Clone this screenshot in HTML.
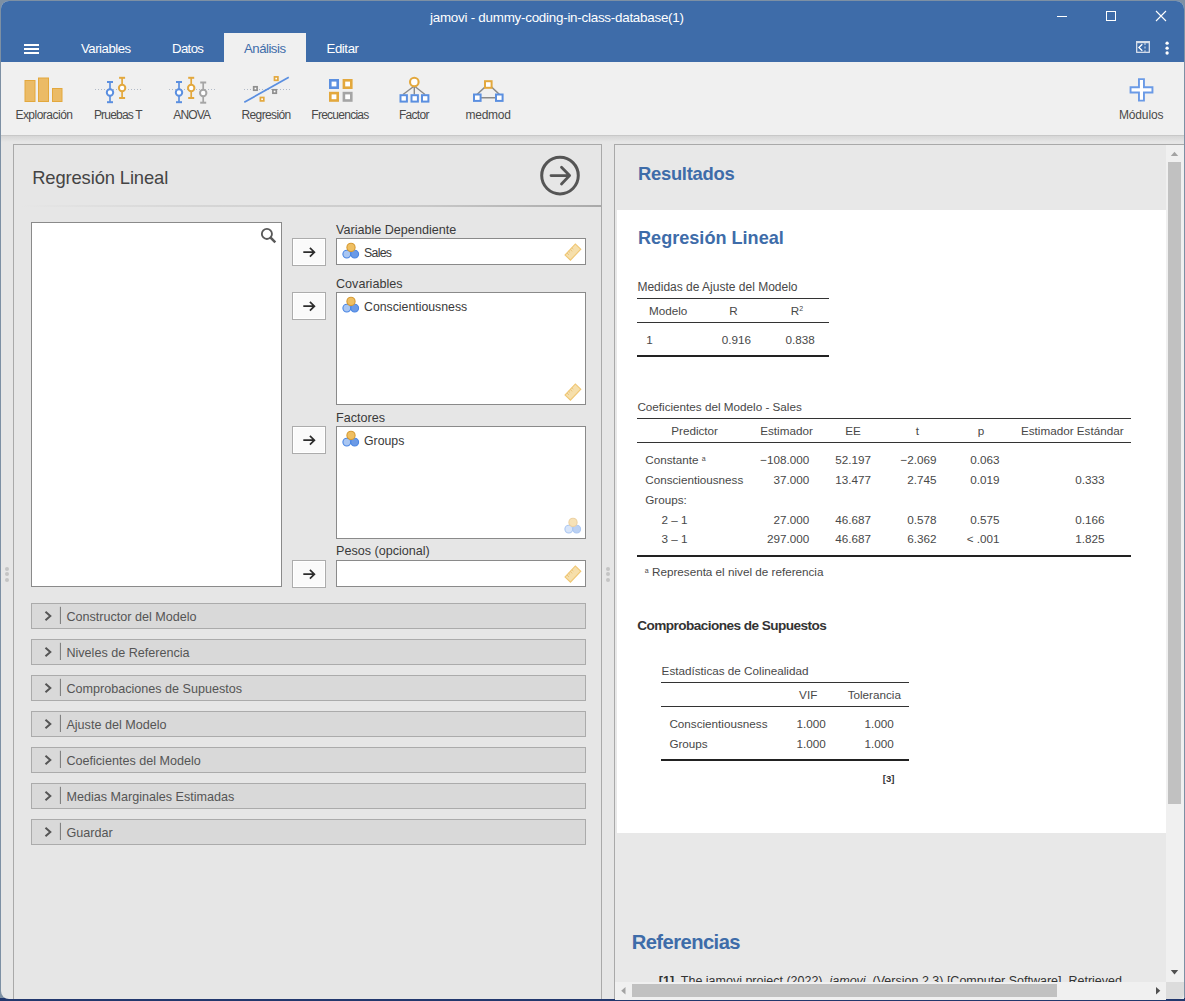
<!DOCTYPE html>
<html><head><meta charset="utf-8">
<style>
*{margin:0;padding:0;box-sizing:border-box}
html,body{width:1185px;height:1001px;overflow:hidden;background:#7d90a4;font-family:"Liberation Sans",sans-serif;color:#333;position:relative}
.a{position:absolute}
.t{position:absolute;white-space:nowrap;line-height:1}
sup{line-height:0}
</style></head><body>
<div class="a" style="left:0px;top:998px;width:1185px;height:3px;background:#22386e"></div>
<div class="a" style="left:1px;top:1px;width:1183px;height:998px;background:#e6e6e6;border-radius:8px 8px 8px 8px;overflow:hidden" id="win"></div>
<div class="a" style="left:1px;top:1px;width:1183px;height:61px;background:#3e6ca9;border-radius:8px 8px 0 0"></div>
<div class="t" style="top:10.56px;font-size:13.4px;color:#fff;letter-spacing:-0.249px;left:430px;">jamovi - dummy-coding-in-class-database(1)</div>
<svg class="a" style="left:1050px;top:5px" width="130" height="24" viewBox="1050 5 130 24"><line x1="1057" y1="16.5" x2="1067" y2="16.5" stroke="#fff" stroke-width="1"/><rect x="1106.5" y="11.5" width="9" height="9" fill="none" stroke="#fff" stroke-width="1"/><path d="M1156 11 L1166 21 M1166 11 L1156 21" stroke="#fff" stroke-width="1.1"/></svg>
<div class="a" style="left:24px;top:44px;width:15px;height:2px;background:#fff"></div>
<div class="a" style="left:24px;top:48px;width:15px;height:2px;background:#fff"></div>
<div class="a" style="left:24px;top:52px;width:15px;height:2px;background:#fff"></div>
<div class="a" style="left:224px;top:33px;width:82px;height:29px;background:#f0f0f0"></div>
<div class="t" style="top:42.23px;font-size:13.2px;color:#fff;letter-spacing:-0.482px;left:81px;">Variables</div>
<div class="t" style="top:42.23px;font-size:13.2px;color:#fff;letter-spacing:-0.621px;left:172px;">Datos</div>
<div class="t" style="top:42.23px;font-size:13.2px;color:#3e6ca9;letter-spacing:-0.496px;left:244px;">Análisis</div>
<div class="t" style="top:42.23px;font-size:13.2px;color:#fff;letter-spacing:-0.397px;left:326.5px;">Editar</div>
<svg class="a" style="left:1130px;top:36px" width="50" height="22" viewBox="1130 36 50 22"><rect x="1136.7" y="41.7" width="12.6" height="10.6" fill="none" stroke="#e4e9f1" stroke-width="1.2"/><rect x="1136.1" y="41" width="13.8" height="2.2" fill="#d6dee9"/><line x1="1145" y1="43" x2="1145" y2="52.3" stroke="#b9c8dc" stroke-width="1.3" stroke-dasharray="2 1.6"/><path d="M1142.3 44.2 L1138.9 47.5 L1142.3 50.8" fill="none" stroke="#fff" stroke-width="1.3"/><circle cx="1167.1" cy="43.2" r="1.65" fill="#fff"/><circle cx="1167.1" cy="48.2" r="1.65" fill="#fff"/><circle cx="1167.1" cy="53" r="1.65" fill="#fff"/></svg>
<div class="a" style="left:1px;top:62px;width:1183px;height:73px;background:#f0f0f0"></div>
<div class="a" style="left:1px;top:135px;width:1183px;height:1px;background:#c8c8c8"></div>
<div class="a" style="left:1px;top:136px;width:1183px;height:6px;background:linear-gradient(#d6d6d6,#e6e6e6)"></div>
<svg class="a" style="left:0;top:61px" width="1185" height="74" viewBox="0 61 1185 74"><rect x="25" y="80.5" width="10" height="21" fill="#ebbb66" stroke="#e3a83d" stroke-width="1"/><rect x="38.5" y="78" width="10" height="23.5" fill="#ebbb66" stroke="#e3a83d" stroke-width="1"/><rect x="52.5" y="88.5" width="9.5" height="13" fill="#ebbb66" stroke="#e3a83d" stroke-width="1"/><line x1="95" y1="89.5" x2="141" y2="89.5" stroke="#a9b3c2" stroke-width="0.9" stroke-dasharray="1 2"/><line x1="110" y1="82" x2="110" y2="102.2" stroke="#5b8fe0" stroke-width="1.7"/><line x1="107" y1="82" x2="113" y2="82" stroke="#5b8fe0" stroke-width="2"/><line x1="107" y1="102.2" x2="113" y2="102.2" stroke="#5b8fe0" stroke-width="2"/><circle cx="110" cy="92.5" r="3.2" fill="#fff" stroke="#5b8fe0" stroke-width="2"/><line x1="122.1" y1="77.8" x2="122.1" y2="98" stroke="#e3a83d" stroke-width="1.7"/><line x1="119.1" y1="77.8" x2="125.1" y2="77.8" stroke="#e3a83d" stroke-width="2"/><line x1="119.1" y1="98" x2="125.1" y2="98" stroke="#e3a83d" stroke-width="2"/><circle cx="122.1" cy="88" r="3.2" fill="#fff" stroke="#e3a83d" stroke-width="2"/><line x1="169" y1="89.5" x2="215" y2="89.5" stroke="#a9b3c2" stroke-width="0.9" stroke-dasharray="1 2"/><line x1="179" y1="82" x2="179" y2="102.2" stroke="#5b8fe0" stroke-width="1.7"/><line x1="176" y1="82" x2="182" y2="82" stroke="#5b8fe0" stroke-width="2"/><line x1="176" y1="102.2" x2="182" y2="102.2" stroke="#5b8fe0" stroke-width="2"/><circle cx="179" cy="92.5" r="3.2" fill="#fff" stroke="#5b8fe0" stroke-width="2"/><line x1="191.2" y1="77.8" x2="191.2" y2="98" stroke="#e3a83d" stroke-width="1.7"/><line x1="188.2" y1="77.8" x2="194.2" y2="77.8" stroke="#e3a83d" stroke-width="2"/><line x1="188.2" y1="98" x2="194.2" y2="98" stroke="#e3a83d" stroke-width="2"/><circle cx="191.2" cy="88" r="3.2" fill="#fff" stroke="#e3a83d" stroke-width="2"/><line x1="203.2" y1="82.5" x2="203.2" y2="102.7" stroke="#a5a5a5" stroke-width="1.7"/><line x1="200.2" y1="82.5" x2="206.2" y2="82.5" stroke="#a5a5a5" stroke-width="2"/><line x1="200.2" y1="102.7" x2="206.2" y2="102.7" stroke="#a5a5a5" stroke-width="2"/><circle cx="203.2" cy="93" r="3.2" fill="#fff" stroke="#a5a5a5" stroke-width="2"/><line x1="244" y1="89.5" x2="290" y2="89.5" stroke="#a9b3c2" stroke-width="0.9" stroke-dasharray="1 2"/><line x1="244.3" y1="102.3" x2="288.8" y2="77.2" stroke="#5b8fe0" stroke-width="1.7"/><rect x="253.70000000000002" y="86.8" width="3.4" height="3.4" fill="#fff" stroke="#8f8f8f" stroke-width="1.7"/><rect x="274.5" y="76.89999999999999" width="3.4" height="3.4" fill="#fff" stroke="#e3a83d" stroke-width="1.7"/><rect x="272.90000000000003" y="89.8" width="3.4" height="3.4" fill="#fff" stroke="#8f8f8f" stroke-width="1.7"/><rect x="260.40000000000003" y="97.5" width="3.4" height="3.4" fill="#fff" stroke="#e3a83d" stroke-width="1.7"/><rect x="330.3" y="80.3" width="7.4" height="7.4" fill="#fff" stroke="#5b8fe0" stroke-width="2.6"/><rect x="343.90000000000003" y="80.3" width="7.4" height="7.4" fill="#fff" stroke="#e3a83d" stroke-width="2.6"/><rect x="330.3" y="93.1" width="7.4" height="7.4" fill="#fff" stroke="#e3a83d" stroke-width="2.6"/><rect x="343.90000000000003" y="93.1" width="7.4" height="7.4" fill="#fff" stroke="#a5a5a5" stroke-width="2.6"/><path d="M414.3 86 L403 94.5 M414.3 86 L414.3 94.5 M414.3 86 L425 94.5" stroke="#8a8a8a" stroke-width="1.4" fill="none"/><circle cx="414.3" cy="82" r="4.3" fill="#fff" stroke="#e3a83d" stroke-width="2.1"/><rect x="400.5" y="95.2" width="6.4" height="6.4" fill="#fff" stroke="#5b8fe0" stroke-width="2"/><rect x="411.5" y="95.2" width="6.4" height="6.4" fill="#fff" stroke="#5b8fe0" stroke-width="2"/><rect x="422" y="95.2" width="6.4" height="6.4" fill="#fff" stroke="#5b8fe0" stroke-width="2"/><path d="M485 87 L477 94.5 M491.5 87 L499.5 94.5 M481 97.8 L495 97.8" stroke="#8a8a8a" stroke-width="1.6" fill="none"/><rect x="485" y="81.2" width="6.6" height="6.6" fill="#fff" stroke="#e3a83d" stroke-width="2"/><rect x="474" y="94.5" width="6.6" height="6.4" fill="#fff" stroke="#5b8fe0" stroke-width="2"/><rect x="496" y="94.5" width="6.6" height="6.4" fill="#fff" stroke="#5b8fe0" stroke-width="2"/><path d="M1138.95 79.15 H1143.95 V87.25 H1152.45 V92.55 H1143.95 V100.65 H1138.95 V92.55 H1130.55 V87.25 H1138.95 Z" fill="#fff" stroke="#6a9ae6" stroke-width="1.9"/></svg>
<div class="t" style="top:108.84px;font-size:12px;color:#4a4a4a;letter-spacing:-0.510px;left:15.4px;">Exploración</div>
<div class="t" style="top:108.84px;font-size:12px;color:#4a4a4a;letter-spacing:-0.805px;left:93.9px;">Pruebas T</div>
<div class="t" style="top:108.84px;font-size:12px;color:#4a4a4a;letter-spacing:-0.857px;left:173.3px;">ANOVA</div>
<div class="t" style="top:108.84px;font-size:12px;color:#4a4a4a;letter-spacing:-0.624px;left:241.5px;">Regresión</div>
<div class="t" style="top:108.84px;font-size:12px;color:#4a4a4a;letter-spacing:-0.737px;left:311.3px;">Frecuencias</div>
<div class="t" style="top:108.84px;font-size:12px;color:#4a4a4a;letter-spacing:-0.684px;left:398.9px;">Factor</div>
<div class="t" style="top:108.84px;font-size:12px;color:#4a4a4a;letter-spacing:-0.216px;left:465.4px;">medmod</div>
<div class="t" style="top:108.84px;font-size:12px;color:#4a4a4a;letter-spacing:-0.160px;left:1119px;">Módulos</div>
<div class="a" style="left:13px;top:144px;width:589px;height:855px;border:1px solid #a9a9a9;border-bottom:none;background:#e6e6e6"></div>
<div class="t" style="top:169.22px;font-size:18.4px;color:#444;letter-spacing:-0.133px;left:32.2px;">Regresión Lineal</div>
<svg class="a" style="left:535px;top:150px" width="50" height="50" viewBox="535 150 50 50"><circle cx="560" cy="175.6" r="18.3" fill="none" stroke="#555" stroke-width="3"/><path d="M551 175.6 H569 M561.5 167.3 L569.6 175.6 L561.5 183.9" fill="none" stroke="#555" stroke-width="2.8" stroke-linecap="round" stroke-linejoin="round"/></svg>
<div class="a" style="left:20px;top:205px;width:581px;height:2px;background:linear-gradient(90deg,#e6e6e6,#d6d6d6 30%,#c8c8c8 70%,#a9a9a9)"></div>
<div class="a" style="left:31px;top:222px;width:251px;height:365px;background:#fff;border:1px solid #8a8a8a"></div>
<svg class="a" style="left:255px;top:224px" width="26" height="24" viewBox="255 224 26 24"><circle cx="266.9" cy="233.9" r="5.05" fill="none" stroke="#595959" stroke-width="1.85"/><line x1="270.6" y1="237.6" x2="275.3" y2="242.4" stroke="#595959" stroke-width="2.5"/></svg>
<div class="a" style="left:292px;top:238px;width:34px;height:28px;background:#fafafa;border:1px solid #acacac;box-shadow:inset 0 0 0 1px #fff"></div>
<svg class="a" style="left:292px;top:238px" width="34" height="28" viewBox="0 0 34 28"><path d="M11.3 14.2 H22.2 M17.9 9.8 L22.4 14.2 L17.9 18.6" fill="none" stroke="#2d2d2d" stroke-width="1.7"/></svg>
<div class="a" style="left:292px;top:292px;width:34px;height:28px;background:#fafafa;border:1px solid #acacac;box-shadow:inset 0 0 0 1px #fff"></div>
<svg class="a" style="left:292px;top:292px" width="34" height="28" viewBox="0 0 34 28"><path d="M11.3 14.2 H22.2 M17.9 9.8 L22.4 14.2 L17.9 18.6" fill="none" stroke="#2d2d2d" stroke-width="1.7"/></svg>
<div class="a" style="left:292px;top:426px;width:34px;height:28px;background:#fafafa;border:1px solid #acacac;box-shadow:inset 0 0 0 1px #fff"></div>
<svg class="a" style="left:292px;top:426px" width="34" height="28" viewBox="0 0 34 28"><path d="M11.3 14.2 H22.2 M17.9 9.8 L22.4 14.2 L17.9 18.6" fill="none" stroke="#2d2d2d" stroke-width="1.7"/></svg>
<div class="a" style="left:292px;top:560px;width:34px;height:28px;background:#fafafa;border:1px solid #acacac;box-shadow:inset 0 0 0 1px #fff"></div>
<svg class="a" style="left:292px;top:560px" width="34" height="28" viewBox="0 0 34 28"><path d="M11.3 14.2 H22.2 M17.9 9.8 L22.4 14.2 L17.9 18.6" fill="none" stroke="#2d2d2d" stroke-width="1.7"/></svg>
<div class="t" style="top:224.03px;font-size:12.6px;color:#3a3a3a;left:336px;">Variable Dependiente</div>
<div class="a" style="left:336px;top:238px;width:250px;height:27px;background:#fff;border:1px solid #8a8a8a"></div>
<svg class="a" style="left:341px;top:242px;opacity:1.0" width="20" height="20" viewBox="0 0 20 20"><circle cx="5.8" cy="12.1" r="3.9" fill="#a9c6f2" stroke="#4a86e3" stroke-width="1.1"/><circle cx="13.7" cy="12.1" r="3.9" fill="#6b9ae6" stroke="#4a86e3" stroke-width="1.1"/><circle cx="10" cy="5.4" r="4.1" fill="#efbf62" stroke="#d69b35" stroke-width="1.1"/></svg>
<div class="t" style="top:246.69px;font-size:12.3px;color:#3a3a3a;left:364px;letter-spacing:-0.7px">Sales</div>
<svg class="a" style="left:563px;top:242px" width="20" height="20" viewBox="0 0 20 20"><g transform="rotate(-46.5 9.9 10.1)"><rect x="2.4" y="6.35" width="15" height="7.5" fill="#f6dfab" stroke="#f0c774" stroke-width="1.1"/><path d="M5.2 6.4 V9.2 M7.6 6.4 V8.4 M10 6.4 V9.2 M12.4 6.4 V8.4" stroke="#e6bf73" stroke-width="0.8"/></g></svg>
<div class="t" style="top:277.83px;font-size:12.6px;color:#3a3a3a;left:336px;">Covariables</div>
<div class="a" style="left:336px;top:292px;width:250px;height:113px;background:#fff;border:1px solid #8a8a8a"></div>
<svg class="a" style="left:341px;top:296px;opacity:1.0" width="20" height="20" viewBox="0 0 20 20"><circle cx="5.8" cy="12.1" r="3.9" fill="#a9c6f2" stroke="#4a86e3" stroke-width="1.1"/><circle cx="13.7" cy="12.1" r="3.9" fill="#6b9ae6" stroke="#4a86e3" stroke-width="1.1"/><circle cx="10" cy="5.4" r="4.1" fill="#efbf62" stroke="#d69b35" stroke-width="1.1"/></svg>
<div class="t" style="top:300.79px;font-size:12.3px;color:#3a3a3a;left:364px;">Conscientiousness</div>
<svg class="a" style="left:563px;top:382px" width="20" height="20" viewBox="0 0 20 20"><g transform="rotate(-46.5 9.9 10.1)"><rect x="2.4" y="6.35" width="15" height="7.5" fill="#f6dfab" stroke="#f0c774" stroke-width="1.1"/><path d="M5.2 6.4 V9.2 M7.6 6.4 V8.4 M10 6.4 V9.2 M12.4 6.4 V8.4" stroke="#e6bf73" stroke-width="0.8"/></g></svg>
<div class="t" style="top:411.83px;font-size:12.6px;color:#3a3a3a;left:336px;">Factores</div>
<div class="a" style="left:336px;top:426px;width:250px;height:113px;background:#fff;border:1px solid #8a8a8a"></div>
<svg class="a" style="left:341px;top:430px;opacity:1.0" width="20" height="20" viewBox="0 0 20 20"><circle cx="5.8" cy="12.1" r="3.9" fill="#a9c6f2" stroke="#4a86e3" stroke-width="1.1"/><circle cx="13.7" cy="12.1" r="3.9" fill="#6b9ae6" stroke="#4a86e3" stroke-width="1.1"/><circle cx="10" cy="5.4" r="4.1" fill="#efbf62" stroke="#d69b35" stroke-width="1.1"/></svg>
<div class="t" style="top:434.79px;font-size:12.3px;color:#3a3a3a;left:364px;">Groups</div>
<svg class="a" style="left:563px;top:517px;opacity:0.45" width="20" height="20" viewBox="0 0 20 20"><circle cx="5.8" cy="12.1" r="3.9" fill="#a9c6f2" stroke="#4a86e3" stroke-width="1.1"/><circle cx="13.7" cy="12.1" r="3.9" fill="#6b9ae6" stroke="#4a86e3" stroke-width="1.1"/><circle cx="10" cy="5.4" r="4.1" fill="#efbf62" stroke="#d69b35" stroke-width="1.1"/></svg>
<div class="t" style="top:545.33px;font-size:12.6px;color:#3a3a3a;left:336px;">Pesos (opcional)</div>
<div class="a" style="left:336px;top:560px;width:250px;height:27px;background:#fff;border:1px solid #8a8a8a"></div>
<svg class="a" style="left:563px;top:564px" width="20" height="20" viewBox="0 0 20 20"><g transform="rotate(-46.5 9.9 10.1)"><rect x="2.4" y="6.35" width="15" height="7.5" fill="#f6dfab" stroke="#f0c774" stroke-width="1.1"/><path d="M5.2 6.4 V9.2 M7.6 6.4 V8.4 M10 6.4 V9.2 M12.4 6.4 V8.4" stroke="#e6bf73" stroke-width="0.8"/></g></svg>
<div class="a" style="left:31px;top:603px;width:555px;height:26px;background:#d9d9d9;border:1px solid #ababab"></div>
<svg class="a" style="left:40px;top:603px" width="26" height="26" viewBox="0 0 26 26"><path d="M5.5 8.8 L10.3 13 L5.5 17.2" fill="none" stroke="#555" stroke-width="2"/><line x1="20.4" y1="3.8" x2="20.4" y2="21" stroke="#777" stroke-width="1"/></svg>
<div class="t" style="top:610.93px;font-size:12.6px;color:#555;left:66.4px;">Constructor del Modelo</div>
<div class="a" style="left:31px;top:639px;width:555px;height:26px;background:#d9d9d9;border:1px solid #ababab"></div>
<svg class="a" style="left:40px;top:639px" width="26" height="26" viewBox="0 0 26 26"><path d="M5.5 8.8 L10.3 13 L5.5 17.2" fill="none" stroke="#555" stroke-width="2"/><line x1="20.4" y1="3.8" x2="20.4" y2="21" stroke="#777" stroke-width="1"/></svg>
<div class="t" style="top:646.93px;font-size:12.6px;color:#555;left:66.4px;">Niveles de Referencia</div>
<div class="a" style="left:31px;top:675px;width:555px;height:26px;background:#d9d9d9;border:1px solid #ababab"></div>
<svg class="a" style="left:40px;top:675px" width="26" height="26" viewBox="0 0 26 26"><path d="M5.5 8.8 L10.3 13 L5.5 17.2" fill="none" stroke="#555" stroke-width="2"/><line x1="20.4" y1="3.8" x2="20.4" y2="21" stroke="#777" stroke-width="1"/></svg>
<div class="t" style="top:682.93px;font-size:12.6px;color:#555;left:66.4px;">Comprobaciones de Supuestos</div>
<div class="a" style="left:31px;top:711px;width:555px;height:26px;background:#d9d9d9;border:1px solid #ababab"></div>
<svg class="a" style="left:40px;top:711px" width="26" height="26" viewBox="0 0 26 26"><path d="M5.5 8.8 L10.3 13 L5.5 17.2" fill="none" stroke="#555" stroke-width="2"/><line x1="20.4" y1="3.8" x2="20.4" y2="21" stroke="#777" stroke-width="1"/></svg>
<div class="t" style="top:718.93px;font-size:12.6px;color:#555;left:66.4px;">Ajuste del Modelo</div>
<div class="a" style="left:31px;top:747px;width:555px;height:26px;background:#d9d9d9;border:1px solid #ababab"></div>
<svg class="a" style="left:40px;top:747px" width="26" height="26" viewBox="0 0 26 26"><path d="M5.5 8.8 L10.3 13 L5.5 17.2" fill="none" stroke="#555" stroke-width="2"/><line x1="20.4" y1="3.8" x2="20.4" y2="21" stroke="#777" stroke-width="1"/></svg>
<div class="t" style="top:754.93px;font-size:12.6px;color:#555;left:66.4px;">Coeficientes del Modelo</div>
<div class="a" style="left:31px;top:783px;width:555px;height:26px;background:#d9d9d9;border:1px solid #ababab"></div>
<svg class="a" style="left:40px;top:783px" width="26" height="26" viewBox="0 0 26 26"><path d="M5.5 8.8 L10.3 13 L5.5 17.2" fill="none" stroke="#555" stroke-width="2"/><line x1="20.4" y1="3.8" x2="20.4" y2="21" stroke="#777" stroke-width="1"/></svg>
<div class="t" style="top:790.93px;font-size:12.6px;color:#555;left:66.4px;">Medias Marginales Estimadas</div>
<div class="a" style="left:31px;top:819px;width:555px;height:26px;background:#d9d9d9;border:1px solid #ababab"></div>
<svg class="a" style="left:40px;top:819px" width="26" height="26" viewBox="0 0 26 26"><path d="M5.5 8.8 L10.3 13 L5.5 17.2" fill="none" stroke="#555" stroke-width="2"/><line x1="20.4" y1="3.8" x2="20.4" y2="21" stroke="#777" stroke-width="1"/></svg>
<div class="t" style="top:826.93px;font-size:12.6px;color:#555;left:66.4px;">Guardar</div>
<div class="a" style="left:5px;top:567px;width:4px;height:4px;border-radius:2px;background:#c4c4c4"></div>
<div class="a" style="left:5px;top:572.2px;width:4px;height:4px;border-radius:2px;background:#c4c4c4"></div>
<div class="a" style="left:5px;top:577.5px;width:4px;height:4px;border-radius:2px;background:#c4c4c4"></div>
<div class="a" style="left:606px;top:567px;width:4px;height:4px;border-radius:2px;background:#c4c4c4"></div>
<div class="a" style="left:606px;top:572.2px;width:4px;height:4px;border-radius:2px;background:#c4c4c4"></div>
<div class="a" style="left:606px;top:577.5px;width:4px;height:4px;border-radius:2px;background:#c4c4c4"></div>
<div class="a" style="left:614px;top:144px;width:570px;height:855px;border-left:1px solid #a9a9a9;border-top:1px solid #a9a9a9;background:#e8e8e8"></div>
<div class="t" style="top:165.22px;font-size:18.4px;color:#3e6ca9;letter-spacing:-0.275px;font-weight:bold;left:638px;">Resultados</div>
<div class="a" style="left:617px;top:210px;width:549px;height:623px;background:#fff"></div>
<div class="t" style="top:228.98px;font-size:18.1px;color:#3e6ca9;font-weight:bold;left:638px;">Regresión Lineal</div>
<div class="t" style="top:280.84px;font-size:12px;color:#484848;left:637.4px;">Medidas de Ajuste del Modelo</div>
<div class="a" style="left:637px;top:298px;width:192px;height:1px;background:#333"></div>
<div class="t" style="top:305.00px;font-size:11.7px;color:#484848;left:649px;">Modelo</div>
<div class="t" style="top:305.00px;font-size:11.7px;color:#484848;left:713.5px;width:40px;text-align:center;">R</div>
<div class="t" style="top:305.00px;font-size:11.7px;color:#484848;left:777.0px;width:40px;text-align:center;">R<sup style="font-size:7px;vertical-align:4px">2</sup></div>
<div class="a" style="left:637px;top:322px;width:192px;height:1px;background:#333"></div>
<div class="t" style="top:333.90px;font-size:11.7px;color:#484848;left:646.3px;">1</div>
<div class="t" style="top:333.90px;font-size:11.7px;color:#484848;left:691px;width:60px;text-align:right;">0.916</div>
<div class="t" style="top:333.90px;font-size:11.7px;color:#484848;left:754.7px;width:60px;text-align:right;">0.838</div>
<div class="a" style="left:637px;top:355px;width:192px;height:2px;background:#222"></div>
<div class="t" style="top:401.30px;font-size:11.7px;color:#484848;left:637.4px;">Coeficientes del Modelo - Sales</div>
<div class="a" style="left:637px;top:418px;width:494px;height:1px;background:#333"></div>
<div class="t" style="top:425.10px;font-size:11.7px;color:#484848;left:644.6px;width:100px;text-align:center;">Predictor</div>
<div class="t" style="top:425.10px;font-size:11.7px;color:#484848;left:736.5px;width:100px;text-align:center;">Estimador</div>
<div class="t" style="top:425.10px;font-size:11.7px;color:#484848;left:823.0px;width:60px;text-align:center;">EE</div>
<div class="t" style="top:425.10px;font-size:11.7px;color:#484848;left:897.3px;width:40px;text-align:center;">t</div>
<div class="t" style="top:425.10px;font-size:11.7px;color:#484848;left:961.0px;width:40px;text-align:center;">p</div>
<div class="t" style="top:425.10px;font-size:11.7px;color:#484848;left:992.3px;width:160px;text-align:center;">Estimador Estándar</div>
<div class="a" style="left:637px;top:442px;width:494px;height:1px;background:#333"></div>
<div class="t" style="top:453.80px;font-size:11.7px;color:#484848;left:645.2px;">Constante <sup style="font-size:7px;vertical-align:3px">a</sup></div>
<div class="t" style="top:453.80px;font-size:11.7px;color:#484848;left:729.3px;width:80px;text-align:right;">−108.000</div>
<div class="t" style="top:453.80px;font-size:11.7px;color:#484848;left:790.9px;width:80px;text-align:right;">52.197</div>
<div class="t" style="top:453.80px;font-size:11.7px;color:#484848;left:856.6px;width:80px;text-align:right;">−2.069</div>
<div class="t" style="top:453.80px;font-size:11.7px;color:#484848;left:919.6px;width:80px;text-align:right;">0.063</div>
<div class="t" style="top:473.90px;font-size:11.7px;color:#484848;left:645.2px;">Conscientiousness</div>
<div class="t" style="top:473.90px;font-size:11.7px;color:#484848;left:729.3px;width:80px;text-align:right;">37.000</div>
<div class="t" style="top:473.90px;font-size:11.7px;color:#484848;left:790.9px;width:80px;text-align:right;">13.477</div>
<div class="t" style="top:473.90px;font-size:11.7px;color:#484848;left:856.6px;width:80px;text-align:right;">2.745</div>
<div class="t" style="top:473.90px;font-size:11.7px;color:#484848;left:919.6px;width:80px;text-align:right;">0.019</div>
<div class="t" style="top:473.90px;font-size:11.7px;color:#484848;left:1024.5px;width:80px;text-align:right;">0.333</div>
<div class="t" style="top:494.00px;font-size:11.7px;color:#484848;left:645.2px;">Groups:</div>
<div class="t" style="top:513.60px;font-size:11.7px;color:#484848;left:661.4px;">2 – 1</div>
<div class="t" style="top:513.60px;font-size:11.7px;color:#484848;left:729.3px;width:80px;text-align:right;">27.000</div>
<div class="t" style="top:513.60px;font-size:11.7px;color:#484848;left:790.9px;width:80px;text-align:right;">46.687</div>
<div class="t" style="top:513.60px;font-size:11.7px;color:#484848;left:856.6px;width:80px;text-align:right;">0.578</div>
<div class="t" style="top:513.60px;font-size:11.7px;color:#484848;left:919.6px;width:80px;text-align:right;">0.575</div>
<div class="t" style="top:513.60px;font-size:11.7px;color:#484848;left:1024.5px;width:80px;text-align:right;">0.166</div>
<div class="t" style="top:533.20px;font-size:11.7px;color:#484848;left:661.4px;">3 – 1</div>
<div class="t" style="top:533.20px;font-size:11.7px;color:#484848;left:729.3px;width:80px;text-align:right;">297.000</div>
<div class="t" style="top:533.20px;font-size:11.7px;color:#484848;left:790.9px;width:80px;text-align:right;">46.687</div>
<div class="t" style="top:533.20px;font-size:11.7px;color:#484848;left:856.6px;width:80px;text-align:right;">6.362</div>
<div class="t" style="top:533.20px;font-size:11.7px;color:#484848;left:919.6px;width:80px;text-align:right;">&lt; .001</div>
<div class="t" style="top:533.20px;font-size:11.7px;color:#484848;left:1024.5px;width:80px;text-align:right;">1.825</div>
<div class="a" style="left:637px;top:555px;width:494px;height:2px;background:#222"></div>
<div class="t" style="top:565.60px;font-size:11.7px;color:#484848;left:644.8px;"><sup style="font-size:7px;vertical-align:3px">a</sup> Representa el nivel de referencia</div>
<div class="t" style="top:618.99px;font-size:13.6px;color:#333;letter-spacing:-0.559px;font-weight:bold;left:637.3px;">Comprobaciones de Supuestos</div>
<div class="t" style="top:665.10px;font-size:11.7px;color:#484848;left:661.6px;">Estadísticas de Colinealidad</div>
<div class="a" style="left:661px;top:682px;width:248px;height:1px;background:#333"></div>
<div class="t" style="top:688.90px;font-size:11.7px;color:#484848;left:788.2px;width:40px;text-align:center;">VIF</div>
<div class="t" style="top:688.90px;font-size:11.7px;color:#484848;left:834.3px;width:80px;text-align:center;">Tolerancia</div>
<div class="a" style="left:661px;top:706px;width:248px;height:1px;background:#333"></div>
<div class="t" style="top:717.80px;font-size:11.7px;color:#484848;left:669.4px;">Conscientiousness</div>
<div class="t" style="top:717.80px;font-size:11.7px;color:#484848;left:765.8px;width:60px;text-align:right;">1.000</div>
<div class="t" style="top:717.80px;font-size:11.7px;color:#484848;left:833.8px;width:60px;text-align:right;">1.000</div>
<div class="t" style="top:738.10px;font-size:11.7px;color:#484848;left:669.4px;">Groups</div>
<div class="t" style="top:738.10px;font-size:11.7px;color:#484848;left:765.8px;width:60px;text-align:right;">1.000</div>
<div class="t" style="top:738.10px;font-size:11.7px;color:#484848;left:833.8px;width:60px;text-align:right;">1.000</div>
<div class="a" style="left:661px;top:759px;width:248px;height:2px;background:#222"></div>
<div class="t" style="top:773.66px;font-size:9.5px;color:#333;font-weight:bold;left:854.4px;width:40px;text-align:right;">[3]</div>
<div class="t" style="top:932.40px;font-size:20.2px;color:#3e6ca9;letter-spacing:-0.563px;font-weight:bold;left:631.7px;">Referencias</div>
<div class="t" style="top:974.72px;font-size:12.5px;color:#333;left:658.8px;"><b>[1]</b>&nbsp; The jamovi project (2022). <i>jamovi</i>. (Version 2.3) [Computer Software]. Retrieved</div>
<div class="a" style="left:1166px;top:145px;width:18px;height:837px;background:#f0f0f0"></div>
<div class="a" style="left:1168px;top:162px;width:13px;height:642px;background:#c1c1c1"></div>
<svg class="a" style="left:1166px;top:145px" width="18" height="840" viewBox="1166 145 18 840"><path d="M1170.8 156 L1174.5 151.8 L1178.2 156 Z" fill="#a3a3a3"/><path d="M1170.8 970 L1174.5 974.4 L1178.2 970 Z" fill="#505050"/></svg>
<div class="a" style="left:615px;top:982px;width:551px;height:18px;background:#f0f0f0"></div>
<div class="a" style="left:632px;top:984px;width:425px;height:13px;background:#c1c1c1"></div>
<div class="a" style="left:1166px;top:982px;width:18px;height:17px;background:#dcdcdc;border-bottom-right-radius:6px"></div>
<svg class="a" style="left:615px;top:982px" width="560" height="18" viewBox="615 982 560 18"><path d="M625.5 987 L621.2 990.8 L625.5 994.6 Z" fill="#a3a3a3"/><path d="M1156 987 L1160.3 990.8 L1156 994.6 Z" fill="#505050"/></svg>
</body></html>
